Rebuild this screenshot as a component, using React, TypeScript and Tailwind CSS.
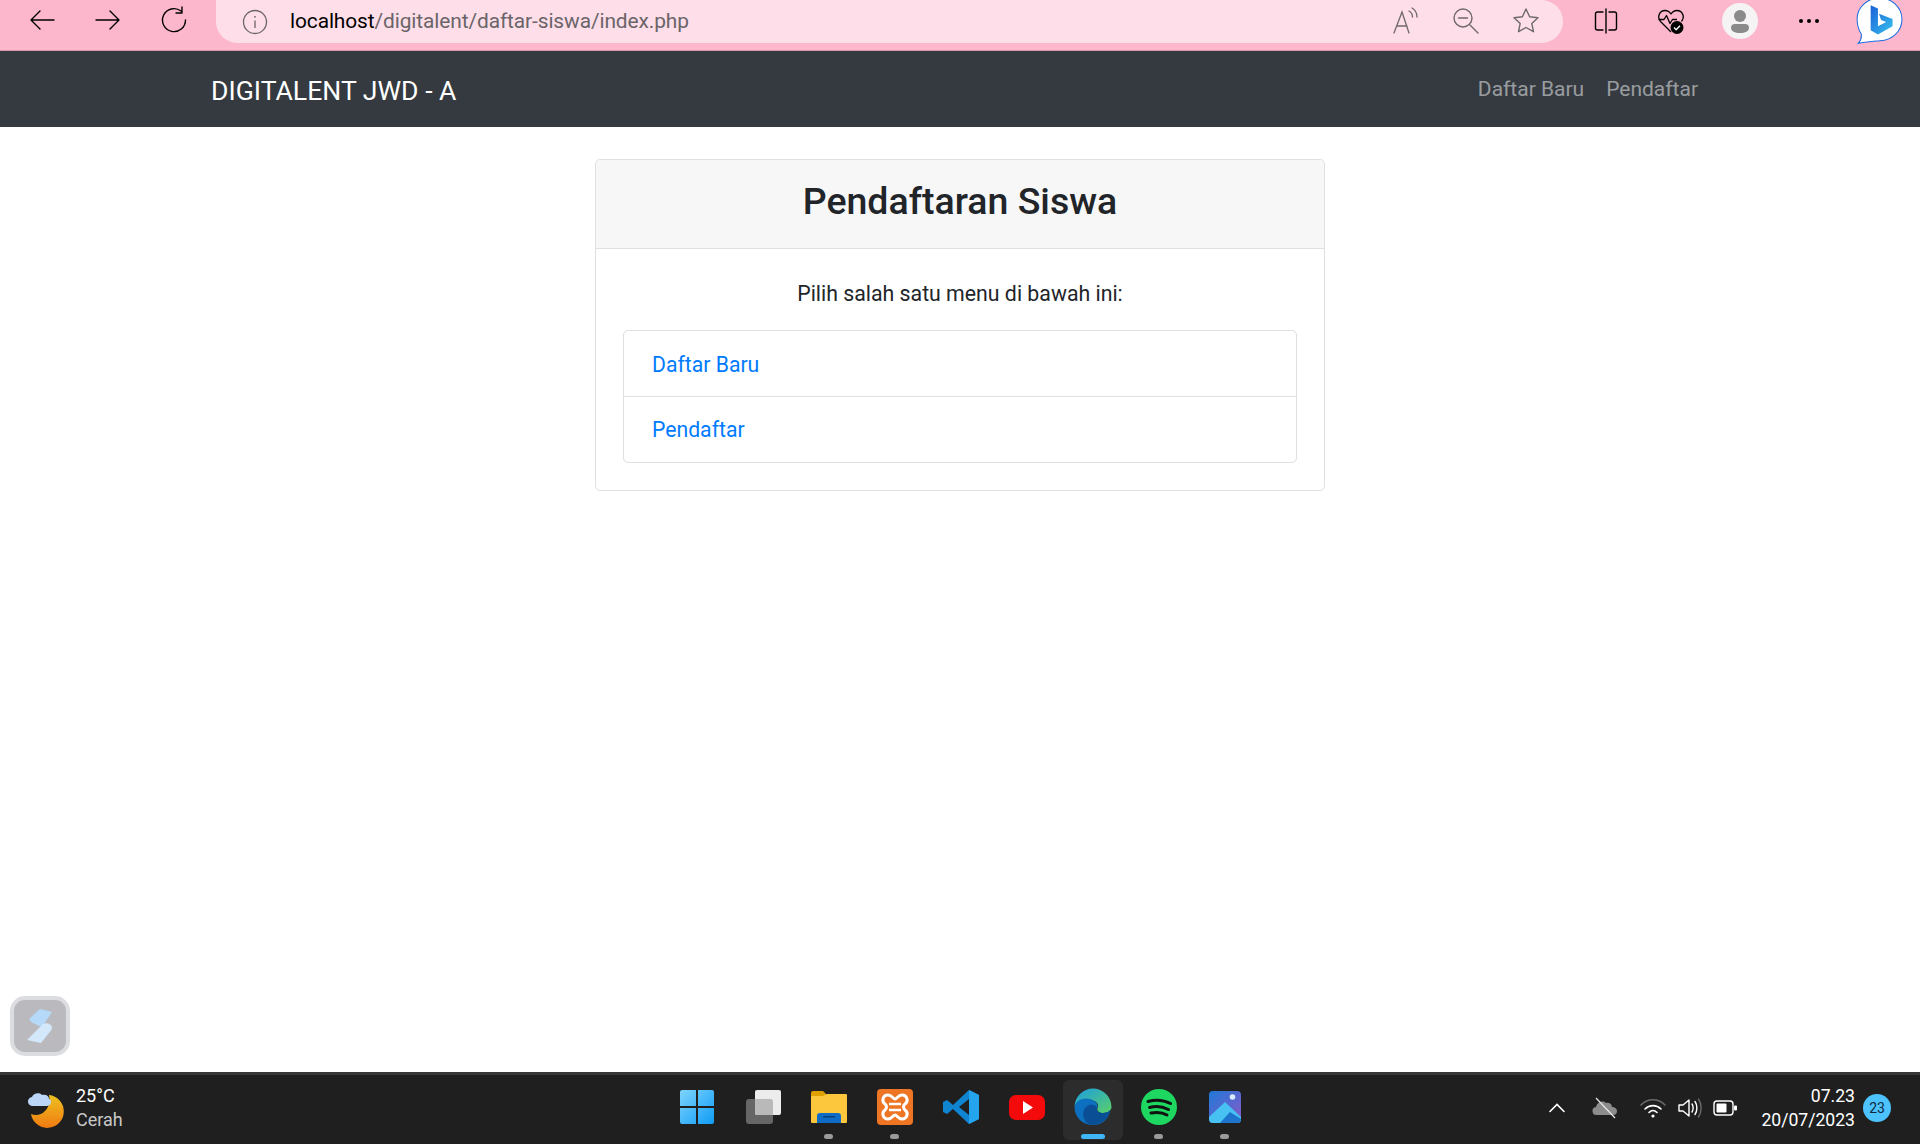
const FONT = "[font-family:Roboto,'Open_Sans',sans-serif]";

function Stroke({ size = 28, children, className = "" }: { size?: number; children: React.ReactNode; className?: string }) {
  return (
    <svg width={size} height={size} viewBox="0 0 28 28" fill="none" stroke="currentColor" strokeWidth="1.4" strokeLinecap="round" strokeLinejoin="round" className={className}>
      {children}
    </svg>
  );
}

function BrowserBar() {
  return (
    <div className="flex h-[51px] shrink-0 items-start overflow-hidden border-b border-[#d895aa] bg-[#fdb7cd]">
      {/* nav buttons */}
      <div className="flex w-[216px] shrink-0 pl-[9px] pt-[6px] text-black">
        <div className="flex w-[66px] justify-center">
          <Stroke><path d="M26 14H3M12 5l-9 9 9 9" /></Stroke>
        </div>
        <div className="flex w-[66px] justify-center">
          <Stroke><path d="M2 14h23M16 5l9 9-9 9" /></Stroke>
        </div>
        <div className="flex w-[66px] justify-center">
          <Stroke><path d="M21 5A11.500 11.500 0 1 0 25.500 14M22 1v6h-6" /></Stroke>
        </div>
      </div>

      {/* address bar */}
      <div className="flex h-[43px] w-[1347px] shrink-0 items-center rounded-r-[22px] rounded-bl-[22px] bg-[#fedfe9] pl-[26px] pr-[23px]">
        <svg width="26" height="26" viewBox="0 0 26 26" fill="none" stroke="#6b6468" strokeWidth="1.3" className="shrink-0">
          <circle cx="13" cy="13" r="11.500" />
          <path d="M13 11.500V19" />
          <circle cx="13" cy="7.800" r="0.900" fill="#6b6468" stroke="none" />
        </svg>
        <div className={`${FONT} ml-[22px] -mt-[1px] text-[20.900px] leading-none tracking-[-0.1px] text-[#6a6468]`}>
          <span className="text-black">localhost</span>/digitalent/daftar-siswa/index.php
        </div>
        <div className="ml-auto -mt-[2px] flex items-center gap-[32px] text-[#6f686c]">
          <svg width="28" height="28" viewBox="0 0 28 28" fill="none" stroke="currentColor" strokeWidth="1.3" strokeLinecap="round">
            <path d="M2 26 10 5l7 21M5 19h10" />
            <path d="M17 4c2.500 1.500 3.500 3.500 3.500 6M20 1c3.500 2 5 5 5 9" />
          </svg>
          <svg width="28" height="28" viewBox="0 0 28 28" fill="none" stroke="currentColor" strokeWidth="1.4" strokeLinecap="round">
            <circle cx="11" cy="11" r="9" />
            <path d="M6.500 11h9M18 18l8 8" />
          </svg>
          <svg width="28" height="28" viewBox="0 0 28 28" fill="none" stroke="currentColor" strokeWidth="1.4" strokeLinejoin="round">
            <path d="m14 2 3.600 7.700 8.400 1-6.200 5.700 1.700 8.300L14 20.500l-7.500 4.200 1.700-8.300L2 10.700l8.400-1z" />
          </svg>
        </div>
      </div>

      {/* toolbar */}
      <div className="flex h-[42px] flex-1 items-center pl-[29px] text-black">
        <Stroke size={28}>
          <path d="M11 5H5.500A2 2 0 0 0 3.500 7v14a2 2 0 0 0 2 2H11M17 5h5.500a2 2 0 0 1 2 2v14a2 2 0 0 1-2 2H17M14 2v24" />
        </Stroke>
        <svg width="28" height="28" viewBox="0 0 28 28" fill="none" stroke="currentColor" strokeWidth="1.300" strokeLinejoin="round" className="ml-[37px]">
          <path d="M14 25 3.500 14.500C-.5 9.500 3 3.500 8 3.500c3 0 4.700 1.500 6 3.500 1.300-2 3-3.500 6-3.500 5 0 8.500 6 4.500 11" />
          <path d="M1.500 12.500H7l2.500-4 3.500 8 2.500-4H20" />
          <circle cx="20" cy="20.500" r="6.500" fill="#000" stroke="none" />
          <path d="m17 20.500 2.200 2.200 3.800-4" stroke="#fff" strokeWidth="1.300" />
        </svg>
        <div className="ml-[37px] flex h-[36px] w-[36px] items-center justify-center rounded-full bg-[#f5f3f4]">
          <svg width="22" height="26" viewBox="0 0 22 26" fill="#8a8a8a">
            <circle cx="11" cy="8" r="6" />
            <path d="M2 20a4 4 0 0 1 4-4h10a4 4 0 0 1 4 4c0 3-4 5-9 5s-9-2-9-5z" />
          </svg>
        </div>
        <div className="ml-[41px] flex gap-[4px]">
          <span className="h-[4px] w-[4px] rounded-full bg-black" />
          <span className="h-[4px] w-[4px] rounded-full bg-black" />
          <span className="h-[4px] w-[4px] rounded-full bg-black" />
        </div>
        {/* bing */}
        <svg width="48" height="50" viewBox="0 0 46 48" className="ml-[36px] mt-[2px] shrink-0">
          <defs>
            <linearGradient id="bingFill" x1="0" y1="0" x2="1" y2="1">
              <stop offset="0" stopColor="#1b5fd8" />
              <stop offset="1" stopColor="#36c3ee" />
            </linearGradient>
          </defs>
          <path d="M23 1a21 20 0 0 1 1 41c-5 .5-10 .5-21 2.500 3-3 3.500-5 3-9C3 31 2 26 2 21 2 10 12 1 23 1z" fill="#fff" stroke="#1d6fe0" strokeWidth="1" />
          <path d="M15 8l7 3v17l8-4-5-2-2-6 13 5v7l-14 8-7-4z" fill="url(#bingFill)" />
        </svg>
      </div>
    </div>
  );
}

function Navbar() {
  return (
    <nav className={`${FONT} flex h-[76px] shrink-0 items-center justify-between bg-[#343a40] pl-[211px] pr-[222px] pt-[2px]`}>
      <a className="pt-[2px] text-[26.600px] text-white">DIGITALENT JWD - A</a>
      <div className="flex gap-[22px] text-[21px] text-white/50">
        <a>Daftar Baru</a>
        <a>Pendaftar</a>
      </div>
    </nav>
  );
}

function MenuCard() {
  return (
    <div className={`${FONT} mx-auto mt-[32px] w-[730px] rounded-[5px] border border-[#dfdfdf] text-[#212529]`}>
      <div className="flex h-[89px] items-center justify-center rounded-t-[5px] border-b border-[#dfdfdf] bg-[#f7f7f7] pb-[5px] text-[37.500px] font-medium">
        Pendaftaran Siswa
      </div>
      <div className="px-[27px] pb-[27px] pt-[30px]">
        <p className="mb-[21px] text-center text-[21.300px] leading-[30px]">Pilih salah satu menu di bawah ini:</p>
        <div className="rounded-[5px] border border-[#dfdfdf] text-[21.200px] text-[#007bff]">
          <a className="flex h-[66px] items-center border-b border-[#dfdfdf] px-[28px] pt-[3px]">Daftar Baru</a>
          <a className="flex h-[65px] items-center px-[28px]">Pendaftar</a>
        </div>
      </div>
    </div>
  );
}

function FloatButton() {
  return (
    <div className="absolute bottom-[88px] left-[10px] flex h-[60px] w-[60px] items-center justify-center rounded-[15px] border-[4px] border-[#dcdde1] bg-[#b9b9be]">
      <svg width="26" height="34" viewBox="0 0 26 34">
        <path d="M13 0l12 3-8 12c-2 2.500-4 2.500-6 1.500l-6-3c-2-1-3-3-2-4.500z" fill="#b5d9f8" />
        <path d="M16 15c3-2 9 0 9 3.500 0 1-.5 2-1 3L14 34 0 31z" fill="#d3e8fa" />
      </svg>
    </div>
  );
}

function TaskIcon({ dot, active, children }: { dot?: "gray" | "blue"; active?: boolean; children: React.ReactNode }) {
  return (
    <div className={`relative flex h-[60px] w-[60px] items-center justify-center rounded-[6px] ${active ? "bg-[#2c2c2c]" : ""}`}>
      <div className="-mt-[6px]">{children}</div>
      {dot === "gray" && <span className="absolute bottom-[1px] h-[5px] w-[9px] rounded-full bg-[#9a9a9a]" />}
      {dot === "blue" && <span className="absolute bottom-[1px] h-[5px] w-[24px] rounded-full bg-[#3fb6f5]" />}
    </div>
  );
}

function Taskbar() {
  return (
    <div className={`${FONT} mt-auto grid h-[72px] shrink-0 grid-cols-[1fr_auto_1fr] items-center border-t-[3px] border-[#363636] bg-[#1f1f1f] text-white`}>
      {/* weather */}
      <div className="flex items-center pl-[28px]">
        <svg width="36" height="36" viewBox="0 0 36 36">
          <defs>
            <linearGradient id="moon" x1="0" y1="0" x2="0" y2="1">
              <stop offset="0" stopColor="#eec21f" />
              <stop offset="1" stopColor="#f07a12" />
            </linearGradient>
          </defs>
          <path d="M21 3A16.500 16.500 0 1 1 3 22C12 26 24 18 21 3z" fill="url(#moon)" />
          <path d="M5 14a4.500 4.500 0 0 1-1-9C5 1 12 0 14 3c4-1 7 1 7 4 3 0 3 7-2 7z" fill="#bcd6f7" />
        </svg>
        <div className="ml-[12px] -mt-[3px] text-[18px] leading-[24px]">
          <div>25°C</div>
          <div className="text-[#c8c8c8]">Cerah</div>
        </div>
      </div>

      {/* pinned apps */}
      <div className="flex gap-[6px] pl-[1px]">
        <TaskIcon>
          <svg width="36" height="36" viewBox="0 0 36 36">
            <defs>
              <linearGradient id="win" x1="0" y1="0" x2="1" y2="1">
                <stop offset="0" stopColor="#7ed4fd" />
                <stop offset="1" stopColor="#0f9cf5" />
              </linearGradient>
            </defs>
            <path d="M1 3a2 2 0 0 1 2-2h14v16H1zM19 1h14a2 2 0 0 1 2 2v14H19zM1 19h16v16H3a2 2 0 0 1-2-2zM19 19h16v14a2 2 0 0 1-2 2H19z" fill="url(#win)" />
          </svg>
        </TaskIcon>
        <TaskIcon>
          <svg width="36" height="36" viewBox="0 0 36 36">
            <rect x="1" y="10" width="27" height="25" rx="3" fill="#666" />
            <rect x="10" y="1" width="26" height="25" rx="2" fill="#ececec" />
            <path d="M10 10h15a3 3 0 0 1 3 3v13H12a2 2 0 0 1-2-2z" fill="#b9b9b9" />
          </svg>
        </TaskIcon>
        <TaskIcon dot="gray">
          <svg width="36" height="36" viewBox="0 0 36 36">
            <path d="M0 4a2 2 0 0 1 2-2h10l4 4h20v6H0z" fill="#e0a100" />
            <path d="M0 33V8a1 1 0 0 1 1-1h11l4-2h19a1 1 0 0 1 1 1v27a1 1 0 0 1-1 1H1a1 1 0 0 1-1-1z" fill="#fcc63d" />
            <path d="M6 27a3 3 0 0 1 3-3h18a3 3 0 0 1 3 3v7H6z" fill="#0f6cc6" />
            <rect x="12" y="27" width="12" height="1.500" fill="#0a3f7a" />
          </svg>
        </TaskIcon>
        <TaskIcon dot="gray">
          <svg width="36" height="36" viewBox="0 0 36 36">
            <rect x="0" y="0" width="36" height="36" rx="4" fill="#ed7524" />
            <path d="M11 6c4 0 5 4 7 4s3-4 7-4c5 0 7 6 3 9-2 1.500-2 4.500 0 6 4 3 2 9-3 9-4 0-5-4-7-4s-3 4-7 4c-5 0-7-6-3-9 2-1.500 2-4.500 0-6-4-3-2-9 3-9z" fill="none" stroke="#fff" strokeWidth="3" />
            <path d="M12 15h12M12 21h12" stroke="#fff" strokeWidth="2.500" />
          </svg>
        </TaskIcon>
        <TaskIcon>
          <svg width="36" height="36" viewBox="0 0 36 36">
            <path d="M26 1 36 6v24l-10 5L10 20l-6 5-4-2V13l4-2 6 5z" fill="#0f85d1" />
            <path d="M26 1 36 6v24l-10 5z" fill="#25a4ee" />
            <path d="M26 10 16 18l10 8z" fill="#1f1f1f" />
          </svg>
        </TaskIcon>
        <TaskIcon>
          <svg width="36" height="36" viewBox="0 0 36 36">
            <rect x="0" y="6" width="36" height="25" rx="7" fill="#f40a0a" />
            <path d="m14 12 10 6.500-10 6.500z" fill="#fff" />
          </svg>
        </TaskIcon>
        <TaskIcon active dot="blue">
          <svg width="38" height="38" viewBox="0 0 38 38">
            <defs>
              <linearGradient id="edgeTop" x1="0" y1="0" x2="1" y2="1">
                <stop offset="0" stopColor="#1b9de2" />
                <stop offset="1" stopColor="#5ad068" />
              </linearGradient>
            </defs>
            <path d="M.5 19a18.500 18.500 0 0 1 37 0c0 3-3 6-8 6-4 0-7-2-6-5 1-2 1-5-3-7-7-3-18 0-20 6z" fill="url(#edgeTop)" />
            <path d="M.5 19C2 11 13 8 20 13c4 2 4 5 3 7-1 3 2 5 6 5 3 0 6-1 7-3-1 9-8 15-17 15C8 37 .5 29 .5 19z" fill="#0c6fc0" />
            <path d="M15 36.500C9 33 7 24 12 19c4-4 9-3 11 1-1 3 2 5 6 5 3 0 6-1 7-3-1 6-5 12-12 14-3 1-6 1-9 .5z" fill="#0a4f95" />
          </svg>
        </TaskIcon>
        <TaskIcon dot="gray">
          <svg width="36" height="36" viewBox="0 0 36 36" fill="none">
            <circle cx="18" cy="18" r="18" fill="#1ed760" />
            <path d="M7 12.500c7-2 16-1.500 22.500 2M8.500 18.500c6-1.500 13-1 19 2M10 24c5-1 11-1 16 2" stroke="#111" strokeWidth="3" strokeLinecap="round" />
          </svg>
        </TaskIcon>
        <TaskIcon dot="gray">
          <svg width="36" height="36" viewBox="0 0 36 36">
            <defs>
              <linearGradient id="photoBg" x1="0" y1="0" x2="1" y2="1">
                <stop offset="0" stopColor="#1e78d8" />
                <stop offset="1" stopColor="#8a5ac8" />
              </linearGradient>
            </defs>
            <rect width="32" height="32" x="2" y="2" rx="4" fill="url(#photoBg)" />
            <circle cx="25.500" cy="8" r="2.800" fill="#dcecff" />
            <path d="M2 28 18 13l16 15v2a4 4 0 0 1-4 4H6a4 4 0 0 1-4-4z" fill="#47c0f2" />
            <path d="M13 34l10-11 11 7a4 4 0 0 1-4 4z" fill="#1e74cc" />
          </svg>
        </TaskIcon>
      </div>

      {/* tray */}
      <div className="flex items-center justify-end pb-[3px] pr-[29px]">
        <svg width="16" height="10" viewBox="0 0 16 10" fill="none" stroke="#fff" strokeWidth="1.600" strokeLinecap="round">
          <path d="M1 8.500 8 1.500l7 7" />
        </svg>
        <svg width="26" height="22" viewBox="0 0 26 22" className="ml-[27px]">
          <path d="M5 18a4 4 0 0 1-1-8c1-5 7-7 10-4 3-1 6 1 6 4 3 0 5 2 5 4s-1 4-4 4z" fill="#8c8c8c" />
          <path d="M4 1l19 20" stroke="#e8e8e8" strokeWidth="1.200" />
        </svg>
        <svg width="26" height="20" viewBox="0 0 26 20" fill="none" stroke="#fff" strokeWidth="1.600" strokeLinecap="round" className="ml-[22px]">
          <path d="M1 7c7-7 17-7 24 0" stroke="#6a6a6a" />
          <path d="M5 11c4.500-4.500 11.500-4.500 16 0M9 14.500c2.500-2.500 5.500-2.500 8 0" />
          <circle cx="13" cy="18" r="1.600" fill="#fff" stroke="none" />
        </svg>
        <svg width="24" height="22" viewBox="0 0 24 22" fill="none" stroke="#fff" strokeWidth="1.400" strokeLinejoin="round" className="ml-[12px]">
          <path d="M1 8v6h4l6 5V3L5 8z" />
          <path d="M14 7c1.500 2 1.500 6 0 8M17 4.500c2.500 3.500 2.500 9.500 0 13" strokeLinecap="round" />
          <path d="M20.500 2c3.500 5 3.500 13 0 18" strokeLinecap="round" stroke="#6a6a6a" />
        </svg>
        <svg width="24" height="16" viewBox="0 0 24 16" fill="none" className="ml-[11px]">
          <rect x="1" y="1" width="19" height="14" rx="3" stroke="#fff" strokeWidth="1.400" />
          <rect x="3.500" y="3.500" width="10" height="9" rx="1" fill="#fff" />
          <rect x="21" y="5.500" width="3" height="5" rx="1" fill="#fff" />
        </svg>
        <div className="ml-[24px] text-right text-[17.600px] leading-[24px]">
          <div>07.23</div>
          <div>20/07/2023</div>
        </div>
        <div className="ml-[8px] flex h-[28px] w-[28px] items-center justify-center rounded-full bg-[#4cc2ff] text-[14px] text-[#0b2a3c]">23</div>
      </div>
    </div>
  );
}

export default function App() {
  return (
    <div className="relative flex h-[1144px] flex-col overflow-hidden bg-white">
      <BrowserBar />
      <Navbar />
      <MenuCard />
      <FloatButton />
      <Taskbar />
    </div>
  );
}
